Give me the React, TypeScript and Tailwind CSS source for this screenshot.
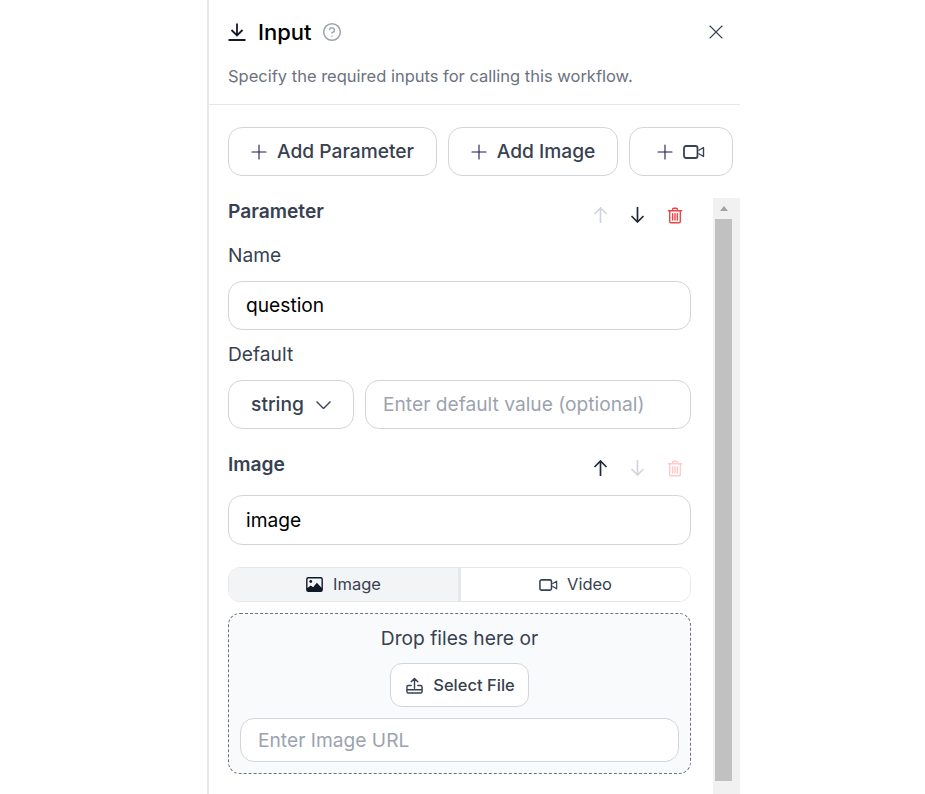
import React from "react";
import { X, Plus, CircleHelp } from "lucide-react";

const font = { fontFamily: "Inter, sans-serif" };

function Video({ className = "" }: { className?: string }) {
  return (
    <svg viewBox="0 0 22 14" fill="none" stroke="currentColor" strokeLinejoin="round" className={className}>
      <rect x="1" y="1" width="13.500" height="12" rx="2" strokeWidth="1.800" />
      <path d="M15.500 5.500 20.500 2.500v9l-5-3" strokeWidth="1.400" />
    </svg>
  );
}

function Trash({ className = "" }: { className?: string }) {
  return (
    <svg viewBox="0 0 16 18" fill="none" stroke="currentColor" strokeWidth="1.500" strokeLinecap="round" strokeLinejoin="round" className={className}>
      <path d="M1 4h14M5.500 4V2.400c0-.6.4-1 1-1h3c.6 0 1 .4 1 1V4" />
      <path d="M2.400 4v11.400c0 .7.500 1.200 1.200 1.200h8.800c.7 0 1.200-.5 1.200-1.200V4" />
      <path d="M5.500 7v6.800M8 7v6.800M10.500 7v6.800" />
    </svg>
  );
}

function Arrow({ dir, className = "" }: { dir: "up" | "down"; className?: string }) {
  return (
    <svg viewBox="0 0 15 16" fill="none" stroke="currentColor" strokeWidth="1.700" className={`h-[16px] w-[15px] ${className}`}>
      {dir === "up" ? <path d="M7.500 16V1M1.500 7l6-6 6 6" /> : <path d="M7.500 0v15M1.500 9l6 6 6-6" />}
    </svg>
  );
}

function AddButton({ children, className }: { children: React.ReactNode; className: string }) {
  return (
    <button className={`flex h-[49px] items-center justify-center rounded-[14px] border border-[#d1d5db] bg-white pr-[4px] text-[#374151] ${className}`}>
      {children}
    </button>
  );
}

function Actions({ up, down, trash }: { up: boolean; down: boolean; trash: boolean }) {
  return (
    <div className="mt-[7px] flex items-center gap-[22px]">
      <Arrow dir="up" className={up ? "text-[#1f2937]" : "text-[#d1d5db]"} />
      <Arrow dir="down" className={down ? "text-[#1f2937]" : "text-[#d1d5db]"} />
      <Trash className={`h-[17px] w-[16px] ${trash ? "text-[#ef4444]" : "text-[#fecaca]"}`} />
    </div>
  );
}

function Field({ value, placeholder, className = "" }: { value?: string; placeholder?: string; className?: string }) {
  return (
    <div className={`flex items-center rounded-[14px] border border-[#d1d5db] bg-white px-[17px] text-[19.2px] ${value ? "text-black" : "text-[#9ca3af]"} ${className}`}>
      {value ?? placeholder}
    </div>
  );
}

export default function App() {
  return (
    <div className="h-[794px] w-[925px] overflow-hidden bg-white" style={font}>
      <div className="ml-[207px] flex h-full w-[533px] flex-col border-l-2 border-[#e5e7eb]">
        <header className="h-[105px] shrink-0 border-b border-[#e5e7eb] pl-[19px] pr-[15px] pt-[16px]">
          <div className="flex h-[32px] items-center">
            <svg viewBox="0 0 18 18" fill="none" stroke="#111827" strokeWidth="1.800" className="h-[18px] w-[18px]">
              <path d="M9 0.500v11.500M3.500 7l5.500 5.500L14.500 7M0.500 17h17" />
            </svg>
            <span className="ml-[12px] text-[22px] font-medium text-black">Input</span>
            <CircleHelp size={20} strokeWidth={1.8} className="ml-[10px] text-[#9ca3af]" />
            <X size={24} strokeWidth={1.1} className="ml-auto mr-[-3px] text-[#374151]" />
          </div>
          <p className="mt-[16px] text-[16.5px] leading-[24px] text-[#6b7280]">Specify the required inputs for calling this workflow.</p>
        </header>

        <div className="flex h-[93px] shrink-0 gap-[11px] pl-[19px] pt-[22px]">
          <AddButton className="w-[209px] gap-[6px] text-[19.2px] font-medium">
            <Plus size={24} strokeWidth={1.1} className="text-[#1e1b4b]" />
            Add Parameter
          </AddButton>
          <AddButton className="w-[170px] gap-[6px] text-[19.2px] font-medium">
            <Plus size={24} strokeWidth={1.1} className="text-[#1e1b4b]" />
            Add Image
          </AddButton>
          <AddButton className="w-[104px] gap-[6px]">
            <Plus size={24} strokeWidth={1.1} className="text-[#1e1b4b]" />
            <Video className="h-[14px] w-[22px]" />
          </AddButton>
        </div>

        <div className="flex min-h-0 flex-1">
          <div className="w-[504px] shrink-0 pl-[19px] pr-[22px]">
            <div className="flex h-[27px] items-center justify-between pr-[8px]">
              <span className="text-[19.2px] font-semibold text-[#374151]">Parameter</span>
              <Actions up={false} down trash />
            </div>
            <div className="mt-[17px] text-[19.2px] leading-[27px] text-[#374151]">Name</div>
            <Field value="question" className="mt-[12px] h-[49px]" />
            <div className="mt-[11px] text-[19.2px] leading-[27px] text-[#374151]">Default</div>
            <div className="mt-[12px] flex gap-[11px]">
              <div className="flex h-[49px] w-[126px] shrink-0 items-center justify-center gap-[12px] rounded-[14px] border border-[#d1d5db] bg-white text-[19.2px] font-medium text-[#374151]">
                string
                <svg viewBox="0 0 15 8" fill="none" stroke="currentColor" strokeWidth="1.400" className="h-[8px] w-[15px]">
                  <path d="M0.500 0.500 7.500 7.500l7-7" />
                </svg>
              </div>
              <Field placeholder="Enter default value (optional)" className="h-[49px] flex-1" />
            </div>

            <div className="mt-[22px] flex h-[27px] items-center justify-between pr-[8px]">
              <span className="text-[19.2px] font-semibold text-[#374151]">Image</span>
              <Actions up down={false} trash={false} />
            </div>
            <Field value="image" className="mt-[17px] h-[50px]" />

            <div className="mt-[22px] flex h-[35px] overflow-hidden rounded-[12px] border border-[#e5e7eb] text-[16.5px] text-[#374151]">
              <div className="flex flex-1 items-center justify-center gap-[10px] border-r-[3px] border-[#e5e7eb] bg-[#f3f4f6]">
                <svg viewBox="0 0 18 16" className="h-[15px] w-[17px]">
                  <rect x="0.800" y="0.800" width="16.400" height="14.400" rx="1.600" fill="none" stroke="#111827" strokeWidth="1.500" />
                  <circle cx="5" cy="4.800" r="1.500" fill="#111827" />
                  <path d="M1 15v-3l4-3 2.500 2 4-5 5.500 6v3z" fill="#111827" />
                </svg>
                Image
              </div>
              <div className="flex flex-1 items-center justify-center gap-[9px] bg-white">
                <Video className="h-[12px] w-[19px]" />
                Video
              </div>
            </div>

            <div className="mt-[11px] flex h-[161px] flex-col items-center rounded-[12px] border border-dashed border-[#6b7280] bg-[#f9fafb] px-[11px] pt-[11px]">
              <div className="text-[19.2px] leading-[27px] text-[#374151]">Drop files here or</div>
              <button className="mt-[11px] flex h-[44px] w-[139px] items-center justify-center gap-[10px] rounded-[12px] border border-[#d1d5db] bg-white pl-[2px] text-[16.5px] font-medium text-[#374151]">
                <svg viewBox="0 0 18 18" fill="none" stroke="#374151" strokeWidth="1.500" strokeLinecap="round" strokeLinejoin="round" className="h-[17px] w-[17px]">
                  <path d="M9 12V1.500M5.500 5 9 1.500 12.500 5" />
                  <path d="M5.500 9H2.500c-.8 0-1.500.7-1.500 1.500v5c0 .8.7 1.500 1.500 1.500h13c.8 0 1.500-.7 1.500-1.500v-5c0-.8-.7-1.500-1.500-1.500h-3" />
                  <path d="M1.500 13.500h15" />
                </svg>
                Select File
              </button>
              <Field placeholder="Enter Image URL" className="mt-[11px] h-[44px] w-full" />
            </div>
          </div>

          <div className="flex w-[27px] shrink-0 flex-col bg-[#f1f1f1] pl-[2px] pr-[8px]">
            <div className="flex h-[21px] shrink-0 items-center justify-center">
              <div className="h-0 w-0 border-x-[4px] border-b-[5px] border-x-transparent border-b-[#a3a3a3]" />
            </div>
            <div className="h-[562px] bg-[#c1c1c1]" />
          </div>
        </div>
      </div>
    </div>
  );
}
